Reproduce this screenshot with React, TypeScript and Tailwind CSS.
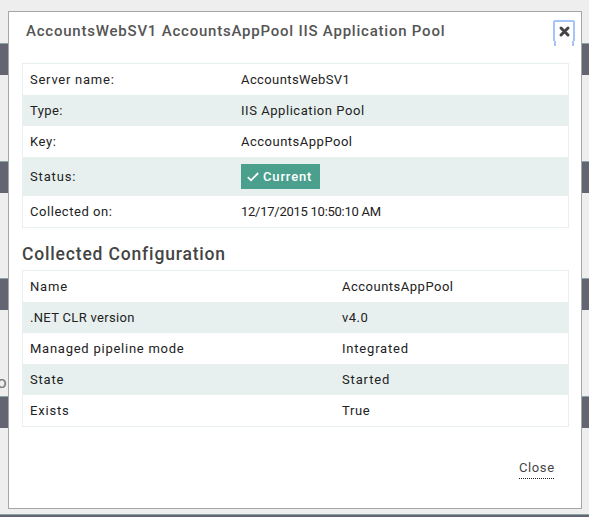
type Row = { label: string; labelCls: string; value: string; valueCls: string; badge?: boolean };

const summary: Row[] = [
  { label: "Server name:", labelCls: "tracking-[0.75px]", value: "AccountsWebSV1", valueCls: "tracking-[0.4px]" },
  { label: "Type:", labelCls: "tracking-[0.4px]", value: "IIS Application Pool", valueCls: "tracking-[0.55px]" },
  { label: "Key:", labelCls: "tracking-[0.6px]", value: "AccountsAppPool", valueCls: "tracking-[0.5px]" },
  { label: "Status:", labelCls: "tracking-[0.85px]", value: "Current", valueCls: "tracking-[0.85px]", badge: true },
  { label: "Collected on:", labelCls: "tracking-[0.55px]", value: "12/17/2015 10:50:10 AM", valueCls: "tracking-[-0.26px]" },
];

const configuration: Row[] = [
  { label: "Name", labelCls: "tracking-[0.85px]", value: "AccountsAppPool", valueCls: "tracking-[0.5px]" },
  { label: ".NET CLR version", labelCls: "tracking-[0.32px]", value: "v4.0", valueCls: "tracking-[0.5px]" },
  { label: "Managed pipeline mode", labelCls: "tracking-[0.75px]", value: "Integrated", valueCls: "tracking-[0.8px]" },
  { label: "State", labelCls: "tracking-[0.8px]", value: "Started", valueCls: "tracking-[0.85px]" },
  { label: "Exists", labelCls: "tracking-[0.8px]", value: "True", valueCls: "tracking-[0.6px]" },
];

function StatusBadge({ text, cls }: { text: string; cls: string }) {
  return (
    <span className="flex h-[25px] w-[79px] items-center bg-[#4a9f8d] pl-[6px] font-medium text-white">
      <svg width="12" height="10" viewBox="0 0 12 10" className="mr-[4px] shrink-0" fill="none" stroke="currentColor" strokeWidth="1.8">
        <path d="M0.8 5.2L4 8.3L11.2 1" />
      </svg>
      <span className={cls}>{text}</span>
    </span>
  );
}

function DataTable({ rows, labelWidth }: { rows: Row[]; labelWidth: string }) {
  return (
    <div className="border border-[#e7f0ee]">
      {rows.map((row, i) => (
        <div
          key={row.label}
          className={`flex items-center pl-[7px] text-[13px] leading-[18px] text-[#222] ${row.badge ? "h-[39px]" : "h-[31px]"} ${i % 2 ? "bg-[#e7f0ee]" : "bg-white"}`}
        >
          <div className={`${labelWidth} shrink-0 whitespace-nowrap`}>
            <span className={row.labelCls}>{row.label}</span>
          </div>
          {row.badge ? (
            <StatusBadge text={row.value} cls={row.valueCls} />
          ) : (
            <span className={`${row.valueCls} whitespace-nowrap`}>{row.value}</span>
          )}
        </div>
      ))}
    </div>
  );
}

function Backdrop() {
  const band = "h-[32px] shrink-0 border-t border-[#8ba3a4] bg-[#636672]";
  return (
    <div className="flex h-full flex-col pt-[43px]">
      <div className={band} />
      <div className="h-[86px] shrink-0" />
      <div className={band} />
      <div className="h-[85px] shrink-0" />
      <div className={band} />
      <div className="flex h-[86px] shrink-0 items-end pb-[4px] text-[17px] leading-[20px] text-[#777]">
        <span className="-ml-[3px]">o</span>
      </div>
      <div className={band} />
      <div className="h-[86px] shrink-0" />
      <div className={band} />
    </div>
  );
}

export default function App() {
  return (
    <div className="relative h-[517px] w-[589px] overflow-hidden bg-[#eee] font-['Roboto',sans-serif]">
      <Backdrop />
      <div className="absolute left-[8px] top-[11px] flex h-[498px] w-[574px] flex-col border border-[#a6a6a6] bg-white pl-[13px] pr-[12px]">
        <header className="flex h-[51px] items-start justify-between pl-[4px]">
          <h1 className="mt-[9px] whitespace-nowrap text-[15px] font-medium leading-[20px] tracking-[0.78px] text-[#555]">
            AccountsWebSV1 AccountsAppPool IIS Application Pool
          </h1>
          <button className="-mr-[6px] mt-[8px] flex h-[26px] w-[22px]" aria-label="Close dialog">
            <svg width="22" height="26" viewBox="0 0 22 26" fill="none">
              <path d="M1 21V2Q1 1 2 1H20Q21 1 21 2V21" stroke="#a3c5fa" strokeWidth="2" />
              <path d="M2 21V26M20 21V26" stroke="#a3c5fa" strokeWidth="2" />
              <path d="M8 8L15 15M15 8L8 15" stroke="#444" strokeWidth="3" strokeLinecap="round" />
            </svg>
          </button>
        </header>
        <DataTable rows={summary} labelWidth="w-[211px]" />
        <h2 className="mb-[4px] mt-[15px] whitespace-nowrap text-[17.5px] font-medium leading-[23px] tracking-[0.83px] text-[#444]">
          Collected Configuration
        </h2>
        <DataTable rows={configuration} labelWidth="w-[312px]" />
        <footer className="mt-[31px] flex justify-end pr-[15px]">
          <button className="h-[21px] w-[35px] whitespace-nowrap border-b border-dotted border-[#222] text-left text-[13px] leading-[18px] tracking-[0.6px] text-[#444]">
            Close
          </button>
        </footer>
      </div>
    </div>
  );
}
